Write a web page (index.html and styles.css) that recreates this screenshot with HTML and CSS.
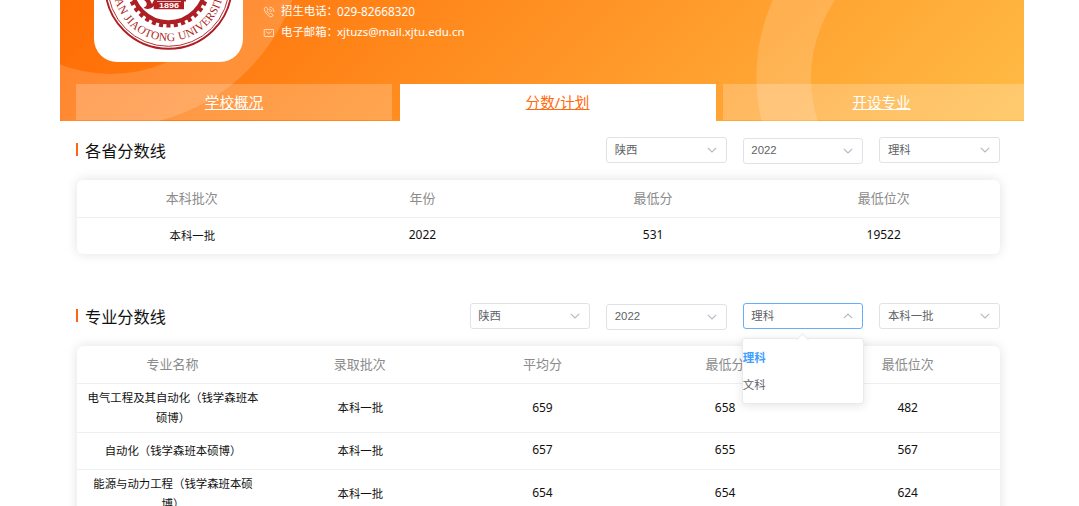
FILE: index.html
```html
<!DOCTYPE html>
<html lang="zh-CN">
<head>
<meta charset="utf-8">
<title>分数/计划</title>
<link rel="stylesheet" href="styles.css">
</head>
<body>
<svg class="defs" width="0" height="0">
  <symbol id="chevron" viewBox="0 0 10 6"><path d="M.8.8 5 5 9.2.8" fill="none" stroke="#b4b8c0" stroke-width="1.100"/></symbol>
</svg>
<main class="page">
  <header class="hero">
    <svg class="rings" viewBox="0 0 964 121" width="964" height="121">
      <path fill="#fff" fill-opacity=".16" fill-rule="evenodd" d="M-142-66a193 193 0 1 0 386 0a193 193 0 1 0-386 0zM-89-66a140 140 0 1 0 280 0a140 140 0 1 0-280 0z"/>
      <path fill="#fff" fill-opacity=".16" fill-rule="evenodd" d="M696.500 77a190 190 0 1 0 380 0a190 190 0 1 0-380 0zM751 78a138 138 0 1 0 276 0a138 138 0 1 0-276 0z"/>
    </svg>
    <div class="school">
      <div class="logo">
        <svg viewBox="94 0 149 62" width="149" height="62">
          <g fill="none" stroke="#ad1f24">
            <circle cx="168.500" cy="-14.500" r="63.300" stroke-width="1.900"/>
            <circle cx="168.500" cy="-14.500" r="60.800" stroke-width=".9"/>
            <circle cx="168.500" cy="-14.500" r="36.800" stroke-width="4"/>
            <circle cx="168.500" cy="-14.500" r="40" stroke-width="4.200" stroke-dasharray="4.100 3.292" stroke-dashoffset="-1.600"/>
          </g>
          <path fill="#ad1f24" d="M144 0h6l2 4 2-4h32v1.500h-2v7.800h-30.300V6c-2 3-8 4-10 1.500 4-1 4-5 .3-7.500z"/>
          <path d="M157 1.500h24" stroke="#fff" stroke-width=".7"/>
          <text class="seal-year" x="169" y="8.300" text-anchor="middle" textLength="20" lengthAdjust="spacingAndGlyphs">1896</text>
          <path id="arc" fill="none" d="M113-14.500a55.500 55.500 0 0 0 111 0"/>
          <g class="seal-text">
            <text><textPath href="#arc" startOffset="14.500" textLength="17">AN</textPath></text>
            <text><textPath href="#arc" startOffset="35" textLength="59">JIAOTONG</textPath></text>
            <text><textPath href="#arc" startOffset="98" textLength="71">UNIVERSITY</textPath></text>
          </g>
        </svg>
      </div>
      <div class="contacts">
        <div class="contact">
          <svg viewBox="0 0 12 12" width="12" height="12" fill="none" stroke="#fff" stroke-width=".8"><path d="M2.800 1.200 1.400 2.300C.6 4.700 4.800 10.200 8 10.900l1.900-1.100c.3-.3.200-.7-.1-1L8.200 7.500c-.4-.3-.7-.2-1 .1l-.6.6C5.500 7.700 4.200 6 3.900 4.900l.7-.6c.4-.3.400-.6.2-1l-1-1.800c-.2-.4-.6-.5-1-.3zM6.200 3.100c1.600 0 2.700 1.200 2.700 2.800M6.500 1.100c2.700.1 4.500 2 4.500 4.700M6.400 4.800c.6.100.9.400.9 1"/></svg>
          <span>招生电话：</span><span class="phone">029-82668320</span>
        </div>
        <div class="contact">
          <svg viewBox="0 0 12 12" width="12" height="12" fill="none" stroke="#fff" stroke-width=".8"><rect x="1.200" y="2.500" width="9.400" height="7" rx=".4"/><path d="m3.200 4.500 2.700 2 2.700-2"/></svg>
          <span>电子邮箱：</span><span class="mail">xjtuzs@mail.xjtu.edu.cn</span>
        </div>
      </div>
    </div>
    <nav class="tabs">
      <a class="tab">学校概况</a>
      <a class="tab active">分数/计划</a>
      <a class="tab last">开设专业</a>
    </nav>
  </header>

  <section class="section">
    <div class="bar">
      <h2 class="title">各省分数线</h2>
      <div class="select">陕西<svg class="arrow"><use href="#chevron"/></svg></div>
      <div class="select year">2022<svg class="arrow"><use href="#chevron"/></svg></div>
      <div class="select">理科<svg class="arrow"><use href="#chevron"/></svg></div>
    </div>
    <div class="card">
      <div class="row four head"><span>本科批次</span><span>年份</span><span>最低分</span><span>最低位次</span></div>
      <div class="row four"><span>本科一批</span><span class="num">2022</span><span class="num">531</span><span class="num">19522</span></div>
    </div>
  </section>

  <section class="section majors">
    <div class="bar">
      <h2 class="title">专业分数线</h2>
      <div class="select">陕西<svg class="arrow"><use href="#chevron"/></svg></div>
      <div class="select year">2022<svg class="arrow"><use href="#chevron"/></svg></div>
      <div class="select open">理科<svg class="arrow"><use href="#chevron"/></svg>
        <div class="menu"><div class="option chosen">理科</div><div class="option">文科</div></div>
      </div>
      <div class="select">本科一批<svg class="arrow"><use href="#chevron"/></svg></div>
    </div>
    <div class="card">
      <div class="row five head"><span>专业名称</span><span>录取批次</span><span>平均分</span><span>最低分</span><span>最低位次</span></div>
      <div class="row five tall"><span class="name">电气工程及其自动化（钱学森班本<br>硕博）</span><span>本科一批</span><span class="num">659</span><span class="num">658</span><span class="num">482</span></div>
      <div class="row five"><span class="name">自动化（钱学森班本硕博）</span><span>本科一批</span><span class="num">657</span><span class="num">655</span><span class="num">567</span></div>
      <div class="row five tall"><span class="name">能源与动力工程（钱学森班本硕<br>博）</span><span>本科一批</span><span class="num">654</span><span class="num">654</span><span class="num">624</span></div>
    </div>
  </section>
</main>
</body>
</html>
```
FILE: styles.css
```css
* { box-sizing: border-box; }
html, body { height: 100%; }
body {
  margin: 0;
  overflow: hidden;
  background: #fff;
  color: #111;
  font: 11.4px/20px "Noto Sans", "Noto Sans CJK SC", sans-serif;
}
.defs { position: absolute; }
.page { width: 964px; height: 506px; margin-left: 60px; }

.hero {
  position: relative;
  display: flex;
  flex-direction: column;
  justify-content: space-between;
  height: 121px;
  padding-left: 16px;
  overflow: hidden;
  background: linear-gradient(135deg, #ff6b04, #ffbc46);
}
.rings { position: absolute; top: 0; left: 0; }
.school { position: relative; display: flex; gap: 20px; padding-left: 18px; }
.logo {
  width: 149px;
  height: 62px;
  overflow: hidden;
  background: #fff;
  border-radius: 0 0 23px 23px;
}
.logo svg { display: block; }
.seal-year { font: bold 7.5px "Liberation Sans", sans-serif; fill: #fff; }
.seal-text { font: 11.5px "Liberation Serif", serif; fill: #ad1f24; }
.contacts { color: #fff; }
.contact { display: flex; align-items: center; height: 21px; white-space: nowrap; }
.contact svg { margin: 2px 6px 0 0; opacity: .85; }
.contact span:first-of-type { width: 56px; font-size: 11.4px; }
.phone { font-size: 11.8px; }
.mail { font-size: 11.5px; }

.tabs {
  position: relative;
  display: grid;
  grid-template-columns: 316px 316px 301px;
  column-gap: 7.5px;
  height: 37px;
}
.tab {
  height: 36px;
  color: #fff;
  background: rgba(255, 255, 255, .22);
  font-size: 14.6px;
  line-height: 36px;
  text-align: center;
  text-decoration: underline;
}
.tab.active { height: 37px; color: #ff6a0d; background: #fff; }
.tab.last { padding-left: 16px; }

.section { width: 940px; padding: 16px 0 0 17px; }
.bar { display: flex; gap: 16px; height: 43px; }
.title {
  display: flex;
  align-items: center;
  flex: 1;
  height: 27px;
  margin: 0 0 0 -1px;
  color: #111;
  font-size: 16.2px;
  font-weight: 400;
}
.title::before {
  content: "";
  width: 2px;
  height: 13px;
  margin: -2px 7px 0 0;
  background: #ff6510;
}
.select {
  position: relative;
  display: flex;
  justify-content: space-between;
  align-items: center;
  width: 120.600px;
  height: 26px;
  padding: 0 9px 0 7.5px;
  border: 1px solid #dfe2e9;
  border-radius: 3px;
  color: #606266;
  font-size: 11.4px;
}
.year { margin-top: 1px; padding-bottom: 2px; font-family: "Liberation Sans", sans-serif; }
.year .arrow { margin-top: 2px; }
.arrow { width: 10px; height: 6px; }
.open { border-color: #66adff; }
.open .arrow { transform: rotate(180deg); }
.menu {
  position: absolute;
  z-index: 2;
  top: 34px;
  left: -2px;
  width: 122px;
  height: 66px;
  padding-top: 6px;
  background: #fff;
  border: 1px solid #e8eaf0;
  border-radius: 3px;
  box-shadow: 0 2px 10px rgba(0, 0, 0, .1);
}
.menu::before {
  content: "";
  position: absolute;
  top: -4px;
  left: 55px;
  width: 8px;
  height: 8px;
  background: #fff;
  border: solid #e8eaf0;
  border-width: 1px 0 0 1px;
  transform: rotate(45deg);
}
.option { height: 27px; line-height: 26px; }
.chosen { color: #409eff; font-weight: 700; }

.card {
  width: 922.500px;
  background: #fff;
  border-radius: 6px;
  box-shadow: 0 0 12px rgba(0, 0, 0, .12);
}
.row { display: grid; align-items: center; height: 36.5px; text-align: center; }
.row + .row { border-top: 1px solid #eeeff1; }
.four { grid-template-columns: repeat(4, 1fr); }
.five { grid-template-columns: 192px repeat(4, 1fr); }
.head { height: 37px; color: #8b8b8b; font-size: 13px; }
.tall { height: 49px; }
.head span { margin: -1px 0 0 -1px; }
.name { white-space: nowrap; }
.num { margin: -1px 0 0 -1px; font-size: 12px; }
.majors { padding-top: 49.500px; }
```
